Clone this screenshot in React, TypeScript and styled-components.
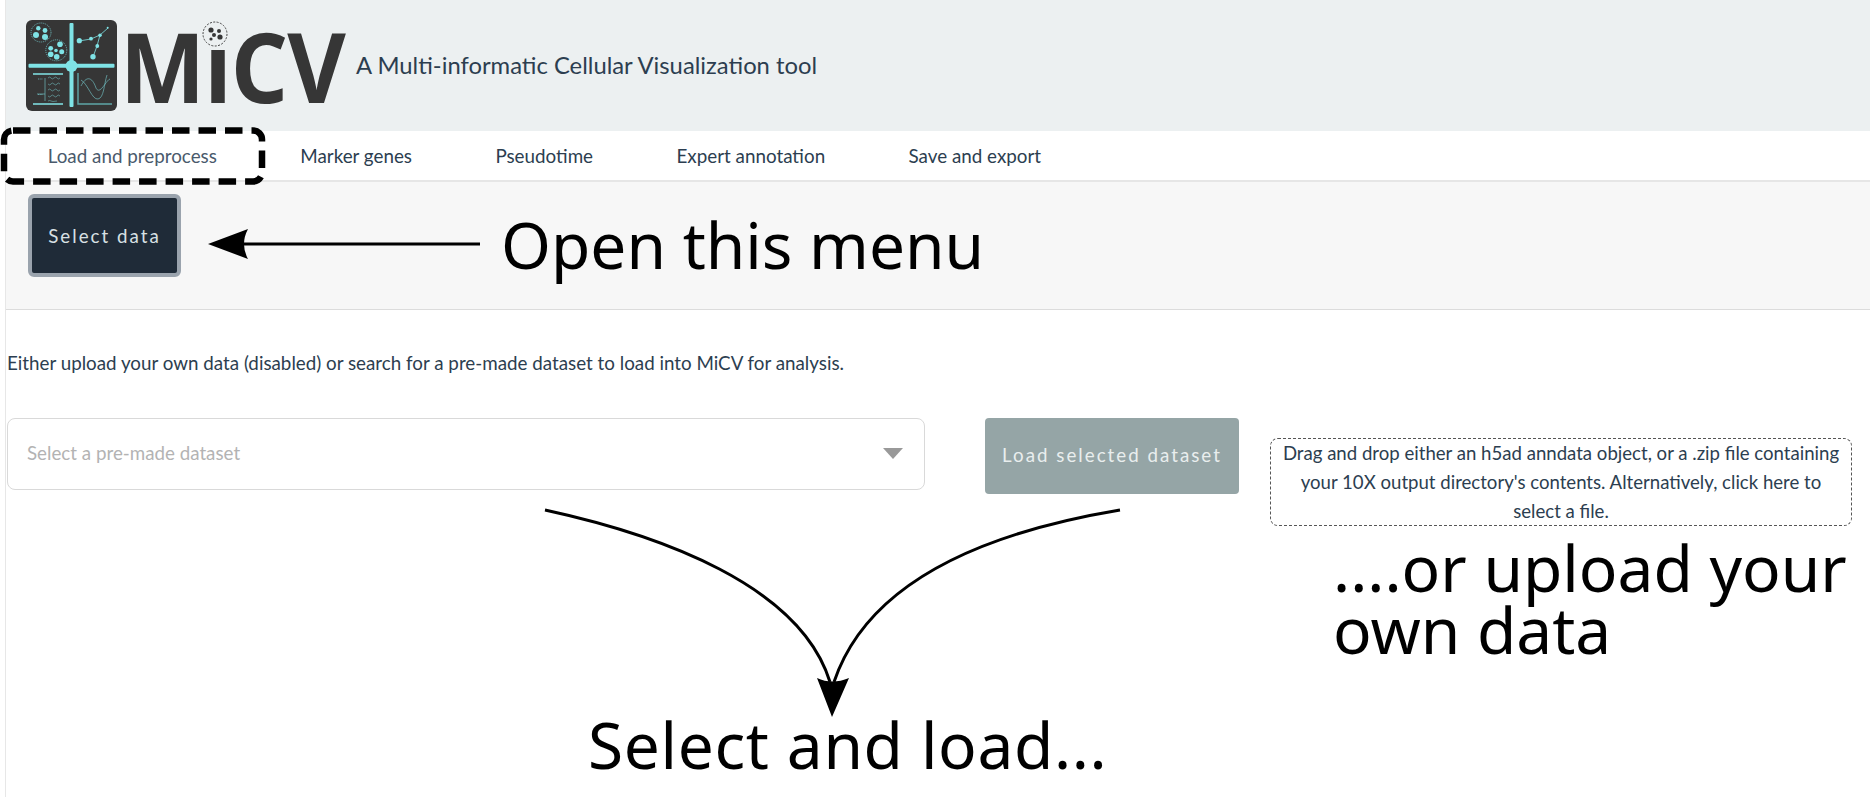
import React from 'react';
import styled, { createGlobalStyle } from 'styled-components';

const Global = createGlobalStyle`
  html, body { margin: 0; padding: 0; background: #fff; }
  body { font-family: Lato, "Liberation Sans", sans-serif; color: #2c3e50; }
`;

const Page = styled.div`
  position: relative;
  width: 1870px;
  height: 797px;
  overflow: hidden;
  padding-left: 6px;
  box-sizing: border-box;
`;
const Frame = styled.div`
  border-left: 1px solid #e7e7e7;
  height: 100%;
  margin-left: -1px;
`;
const Header = styled.header`
  height: 131px;
  background: #ecf0f1;
  display: flex;
  align-items: flex-start;
  padding-left: 20px;
  box-sizing: border-box;
`;
const LogoWrap = styled.div`
  position: relative;
  display: flex;
  align-items: flex-start;
  padding-top: 20px;
  width: 330px;
  flex: none;
`;
const LogoMark = styled.svg`
  flex: none;
`;
const LogoWord = styled.span`
  font-family: "Open Sans", sans-serif;
  font-weight: 700;
  font-size: 97px;
  line-height: 90px;
  color: #363636;
  margin-left: 3px;
  letter-spacing: -1px;
  display: inline-block;
  transform: scaleX(0.93);
  transform-origin: left center;
`;
const DotBadge = styled.svg`
  position: absolute;
  left: 176px;
  top: 21px;
`;
const Tagline = styled.span`
  font-size: 23.8px;
  color: #2c3e50;
  margin: 51px 0 0 0;
  line-height: 28px;
`;
const Tabs = styled.nav`
  height: 51px;
  display: flex;
  border-bottom: 2px solid #e6e6e6;
  box-sizing: border-box;
`;
const Tab = styled.div`
  padding: 0 41.7px;
  display: flex;
  align-items: center;
  font-size: 18.82px;
  color: ${p => (p.$active ? '#4a5a6c' : '#2c3e50')};
`;
const NavBar = styled.div`
  height: 128px;
  background: #f7f7f7;
  border-bottom: 1px solid #dcdcdc;
  box-sizing: border-box;
  padding: 12px 0 0 22px;
`;
const SelectData = styled.button`
  width: 153px;
  height: 83px;
  background: #1f2b38;
  border: 4px solid #9aa3ad;
  border-radius: 6px;
  color: #d8e0e4;
  font-family: Lato, sans-serif;
  font-size: 18.75px;
  letter-spacing: 2px;
  box-sizing: border-box;
  padding: 0;
`;
const Intro = styled.p`
  margin: 41px 0 0 1px;
  font-size: 18.8px;
  line-height: 24px;
  color: #2c3e50;
`;
const Controls = styled.div`
  display: flex;
  align-items: flex-start;
  margin: 43px 0 0 1px;
`;
const DatasetSelect = styled.div`
  width: 918px;
  height: 72px;
  border: 1px solid #d9d9d9;
  border-radius: 8px;
  box-sizing: border-box;
  display: flex;
  align-items: center;
  justify-content: space-between;
  padding: 0 21px 4px 19px;
  font-size: 18.75px;
  color: #b3b3b3;
`;
const Caret = styled.span`
  width: 0;
  height: 0;
  margin-top: 2px;
  border-left: 10px solid transparent;
  border-right: 10px solid transparent;
  border-top: 11px solid #999;
`;
const LoadButton = styled.button`
  width: 254px;
  height: 76px;
  margin-left: 60px;
  background: #95a5a6;
  border: 0;
  border-radius: 4px;
  color: #e9eeee;
  font-family: Lato, sans-serif;
  font-size: 18.75px;
  letter-spacing: 2px;
  padding: 0 0 4px;
`;
const Drop = styled.div`
  width: 582px;
  height: 88px;
  margin: 20px 0 0 31px;
  border: 1px dashed #555;
  border-radius: 8px;
  box-sizing: border-box;
  text-align: center;
  font-size: 18.6px;
  line-height: 29px;
  color: #2c3e50;
  padding: 0 8px;
`;
const Overlay = styled.svg`
  position: absolute;
  left: 0;
  top: 0;
  pointer-events: none;
`;
const Note = styled.div`
  position: absolute;
  left: ${p => p.$x}px;
  top: ${p => p.$y}px;
  font-family: "Noto Sans", "Open Sans", sans-serif;
  font-size: 64px;
  line-height: 62px;
  letter-spacing: ${p => p.$track}px;
  color: #000;
  white-space: pre;
`;

const Logo = () => (
  <LogoMark width="91" height="91" viewBox="0 0 91 91">
    <rect width="91" height="91" rx="6" fill="#363636" />
    <g fill="#7fe3e6">
      <rect x="43.5" y="3" width="4" height="84" rx="1" />
      <rect x="2.5" y="43.8" width="86" height="4" rx="1" />
      <circle cx="45.5" cy="46" r="6" />
      <circle cx="10" cy="15" r="3" /><circle cx="19" cy="17" r="3" /><circle cx="12.3" cy="8.3" r="2.2" /><circle cx="19" cy="10.5" r="2.4" />
      <circle cx="24.7" cy="28.3" r="2.4" /><circle cx="34" cy="24.3" r="2.8" /><circle cx="24.7" cy="34.2" r="2.8" /><circle cx="30.7" cy="36.7" r="2.8" /><circle cx="35.7" cy="31.7" r="2.5" /><circle cx="30" cy="30.5" r="1.8" />
      <circle cx="53.3" cy="20.7" r="2.6" /><circle cx="65" cy="18.7" r="1.9" /><circle cx="74" cy="15.3" r="1.8" /><circle cx="81.7" cy="7.7" r="1" /><circle cx="71.3" cy="26" r="1.9" /><circle cx="67" cy="36.7" r="2.7" />
    </g>
    <g fill="none" stroke="#7fe3e6">
      <ellipse cx="15" cy="12.5" rx="10" ry="9.5" strokeWidth=".7" strokeDasharray="1 1" />
      <circle cx="30.3" cy="30.3" r="10.5" strokeWidth=".7" strokeDasharray="1 1" />
      <path d="M53 21 L65 19 L74 15 L82 8 M74 15 L71 26 L67 37" strokeWidth=".8" />
      <path d="M7 54 H37 M7 84 H37" stroke="#6fb9bb" strokeWidth="1.8" />
      <path d="M19 58 V81 M11 74 H19" stroke="#6fb9bb" strokeWidth=".7" />
      <path d="M22 58 q2 -2 3 0 t3 0 t3 0 t3 0 M22 64 q2 2 3 0 t3 0 t3 0 t3 0 M22 70 q2 -2 3 0 t3 0 t3 0 t3 0 M22 76 q2 2 3 0 t3 0 t3 0 t3 0 M22 81 q2 -1 3 0 t6 0" stroke="#6fb9bb" strokeWidth=".6" />
      <path d="M12 59 H17 M12 74.5 H17" stroke="#6fb9bb" strokeWidth=".8" strokeDasharray="1 .7" />
      <path d="M52 53 V84 H86" stroke="#5fa6a8" strokeWidth="1.4" />
      <path d="M55 60 C62 64 66 80 72 79 C78 78 78 64 81 55 M55 66 C60 56 66 56 70 68 C74 76 80 60 84 59" stroke="#6fb9bb" strokeWidth=".7" />
    </g>
  </LogoMark>
);

export default function App() {
  return (
    <Page>
      <Global />
      <Frame>
        <Header>
          <LogoWrap>
            <Logo />
            <LogoWord>MiCV</LogoWord>
            <DotBadge width="26" height="26" viewBox="0 0 26 26">
              <circle cx="13" cy="13" r="12" fill="#ecf0f1" stroke="#444" strokeWidth="1" strokeDasharray="2 1.4" />
              <circle cx="9" cy="9" r="2.6" fill="#363636" /><circle cx="17" cy="10" r="2" fill="#363636" /><circle cx="12" cy="14" r="2" fill="#363636" /><circle cx="18" cy="16" r="2.6" fill="#363636" /><circle cx="9" cy="18" r="1.6" fill="#363636" />
            </DotBadge>
          </LogoWrap>
          <Tagline>A Multi-informatic Cellular Visualization tool</Tagline>
        </Header>
        <Tabs>
          <Tab $active>Load and preprocess</Tab>
          <Tab>Marker genes</Tab>
          <Tab>Pseudotime</Tab>
          <Tab>Expert annotation</Tab>
          <Tab>Save and export</Tab>
        </Tabs>
        <NavBar>
          <SelectData>Select data</SelectData>
        </NavBar>
        <Intro>Either upload your own data (disabled) or search for a pre-made dataset to load into MiCV for analysis.</Intro>
        <Controls>
          <DatasetSelect>
            <span>Select a pre-made dataset</span>
            <Caret />
          </DatasetSelect>
          <LoadButton>Load selected dataset</LoadButton>
          <Drop>Drag and drop either an h5ad anndata object, or a .zip file containing your 10X output directory's contents. Alternatively, click here to select a file.</Drop>
        </Controls>
      </Frame>
      <Overlay width="1870" height="797" viewBox="0 0 1870 797">
        <rect x="4" y="130.5" width="258" height="51" rx="9" fill="none" stroke="#000" strokeWidth="6.5" strokeDasharray="17.5 9" />
        <path d="M243 244 H480" stroke="#000" strokeWidth="3" />
        <path d="M208 244 L248 229 Q240 244 248 259 Z" fill="#000" />
        <path d="M545 510 C660 535 800 585 830 682" fill="none" stroke="#000" strokeWidth="3" />
        <path d="M1120 510 C1000 530 870 575 834 682" fill="none" stroke="#000" strokeWidth="3" />
        <path d="M832 717 L817 678 Q832 685 849 678 Z" fill="#000" />
      </Overlay>
      <Note $x={501} $y={214} $track={0}>Open this menu</Note>
      <Note $x={1333} $y={537} $track={0}>{'....or upload your\nown data'}</Note>
      <Note $x={588} $y={714} $track={0.65}>Select and load...</Note>
    </Page>
  );
}
